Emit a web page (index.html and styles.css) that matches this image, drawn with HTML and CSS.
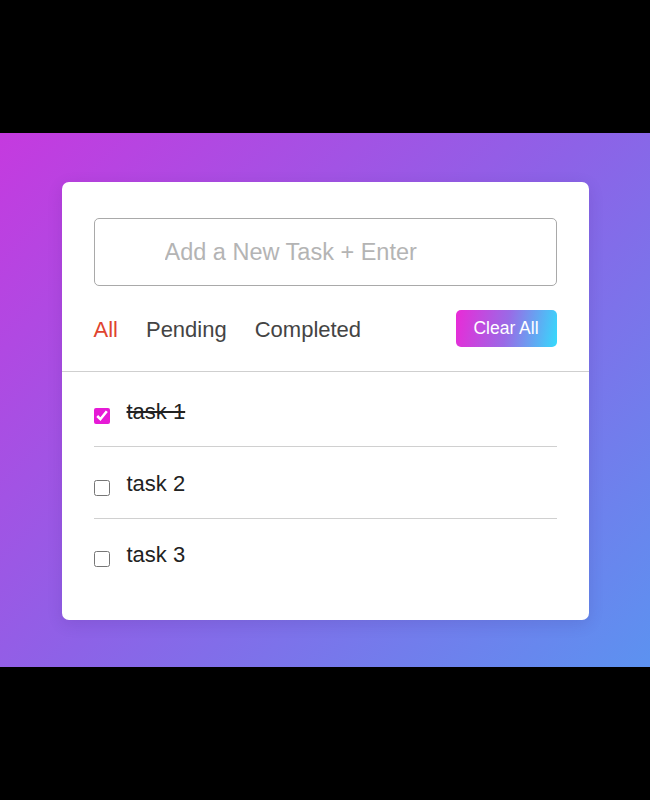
FILE: index.html
```html
<!DOCTYPE html>
<html lang="en">
<head>
<meta charset="utf-8">
<title>Todo</title>
<link rel="stylesheet" href="styles.css">
</head>
<body>
<div class="stage">
  <section class="backdrop">
    <div class="card">
      <div class="head">
        <input class="new-task" type="text" placeholder="Add a New Task + Enter">
        <div class="controls">
          <nav class="filters">
            <span class="filter active">All</span>
            <span class="filter">Pending</span>
            <span class="filter">Completed</span>
          </nav>
          <button class="clear-btn">Clear All</button>
        </div>
      </div>
      <ul class="tasks">
        <li class="task done"><input type="checkbox" checked><span class="label">task 1</span></li>
        <li class="task"><input type="checkbox"><span class="label">task 2</span></li>
        <li class="task"><input type="checkbox"><span class="label">task 3</span></li>
      </ul>
    </div>
  </section>
</div>
</body>
</html>
```
FILE: styles.css
```css
* { box-sizing: border-box; }
html, body { margin: 0; padding: 0; background: #000; }
body { font-family: "Liberation Sans", Arial, sans-serif; }
.stage {
  height: 800px;
  display: flex;
  flex-direction: column;
  justify-content: center;
}
.backdrop {
  height: 534px;
  background: linear-gradient(135deg, #c53adf 0%, #8d62e7 50%, #5c92f0 100%);
  display: flex;
  justify-content: center;
  align-items: center;
  padding-top: 2px;
}
.card {
  width: 527px;
  background: #fff;
  border-radius: 7px;
  box-shadow: 0 4px 16px rgba(40, 20, 90, 0.12);
  padding-bottom: 31px;
}
.head {
  padding: 36px 32px 24px;
  border-bottom: 1px solid #cfcfcf;
}
.new-task {
  display: block;
  width: 100%;
  height: 68px;
  border: 1px solid #a9a9a9;
  border-radius: 5px;
  padding: 0 0 0 70px;
  font-family: "Liberation Sans", Arial, sans-serif;
  font-size: 23.5px;
  color: #333;
  outline: none;
}
.new-task::placeholder { color: #b4b4b4; }
.controls {
  margin-top: 24px;
  display: flex;
  align-items: center;
  justify-content: space-between;
}
.filters {
  display: flex;
  gap: 28px;
  font-size: 22px;
  color: #444;
  padding-top: 3px;
}
.filter.active { color: #e0442f; }
.clear-btn {
  width: 101px;
  height: 37px;
  border: none;
  border-radius: 5px;
  background: linear-gradient(100deg, #ea2ad7 0%, #9a6ae6 50%, #35dafc 100%);
  color: #fff;
  font-family: "Liberation Sans", Arial, sans-serif;
  font-size: 17.5px;
  padding: 0;
}
.tasks {
  list-style: none;
  margin: 0;
  padding: 3px 32px 0;
}
.task {
  height: 72px;
  display: flex;
  align-items: center;
  gap: 17px;
  border-bottom: 1px solid #d0d0d0;
  font-size: 22px;
  color: #222;
  padding-top: 2px;
}
.task:last-child { border-bottom: none; height: 70px; }
.task input {
  width: 16px;
  height: 16px;
  margin: 8px 0 0 0;
  accent-color: #e61ad6;
}
.task.done .label { text-decoration: line-through; }
```
